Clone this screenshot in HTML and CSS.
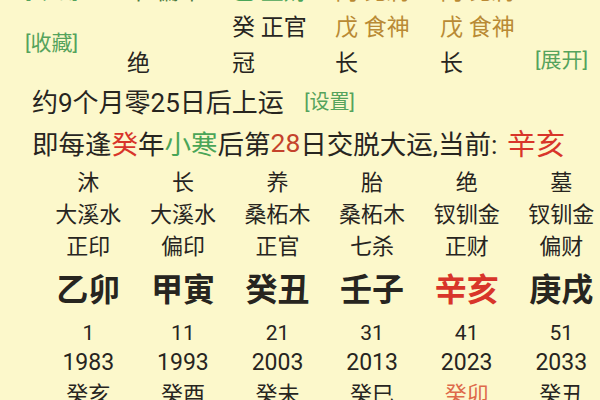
FILE: index.html
```html
<!DOCTYPE html>
<html lang="zh">
<head>
<meta charset="utf-8">
<link rel="stylesheet" href="styles.css">
</head>
<body>
<div class="page">
  <div class="pillars">
    <div class="cell lbl link">[详细]</div>
    <div class="cell dkgreen">甲 偏印</div>
    <div class="cell green">己 正财</div>
    <div class="cell brown">丙 比肩</div>
    <div class="cell brown">丙 比肩</div>
    <div class="cell"></div>

    <div class="cell lbl link span2">[收藏]</div>
    <div class="cell"></div>
    <div class="cell">癸 正官</div>
    <div class="cell brown">戊 食神</div>
    <div class="cell brown">戊 食神</div>
    <div class="cell"></div>

    <div class="cell">绝</div>
    <div class="cell">冠</div>
    <div class="cell">长</div>
    <div class="cell">长</div>
    <div class="cell link open">[展开]</div>
  </div>

  <div class="info">
    <div class="line1">约9个月零25日后上运 <span class="link set">[设置]</span></div>
    <div class="line2">即每逢<span class="red">癸</span>年<span class="green">小寒</span>后第<span class="rust">28</span>日交脱大运,当前: <span class="red big">辛亥</span></div>
  </div>

  <div class="yun">
    <div class="r-state">沐</div><div class="r-state">长</div><div class="r-state">养</div><div class="r-state">胎</div><div class="r-state">绝</div><div class="r-state">墓</div>
    <div class="r-ny">大溪水</div><div class="r-ny">大溪水</div><div class="r-ny">桑柘木</div><div class="r-ny">桑柘木</div><div class="r-ny">钗钏金</div><div class="r-ny">钗钏金</div>
    <div class="r-god">正印</div><div class="r-god">偏印</div><div class="r-god">正官</div><div class="r-god">七杀</div><div class="r-god">正财</div><div class="r-god">偏财</div>
    <div class="r-gz">乙卯</div><div class="r-gz">甲寅</div><div class="r-gz">癸丑</div><div class="r-gz">壬子</div><div class="r-gz red">辛亥</div><div class="r-gz">庚戌</div>
    <div class="r-age">1</div><div class="r-age">11</div><div class="r-age">21</div><div class="r-age">31</div><div class="r-age">41</div><div class="r-age">51</div>
    <div class="r-year">1983</div><div class="r-year">1993</div><div class="r-year">2003</div><div class="r-year">2013</div><div class="r-year">2023</div><div class="r-year">2033</div>
    <div class="r-ln">癸亥</div><div class="r-ln">癸酉</div><div class="r-ln">癸未</div><div class="r-ln">癸巳</div><div class="r-ln orange">癸卯</div><div class="r-ln">癸丑</div>
  </div>
</div>
</body>
</html>
```

FILE: styles.css
```css
html, body {
  margin: 0;
  padding: 0;
  background: #fcf8cb;
  width: 600px;
  height: 400px;
  overflow: hidden;
}
.page {
  font-family: Roboto, "Noto Sans CJK SC", sans-serif;
  color: #27251f;
  width: 600px;
}
.pillars {
  display: grid;
  grid-template-columns: 102px 105px 103px 105px 95px 90px;
  grid-template-rows: 36px 36px 36px;
  margin-top: -27px;
  padding-left: 25px;
  font-size: 23px;
}
.cell {
  display: flex;
  align-items: center;
  white-space: nowrap;
  line-height: 1;
}
.span2 {
  grid-row: span 2;
  padding-bottom: 4px;
}
.open { padding-bottom: 5px; }
.link { color: #55a35c; font-size: 21px; }
.green { color: #4aa557; }
.dkgreen { color: #4a7a3c; }
.brown { color: #b98a34; }
.red { color: #d8352a; }
.rust { color: #c4432c; }
.orange { color: #de6a4a; }

.info {
  padding-left: 32px;
}
.line1 {
  font-size: 26px;
  height: 40px;
  display: flex;
  align-items: center;
  margin-top: -1px;
  white-space: pre;
}
.line1 .set { margin-left: 14px; font-size: 20px; }
.line2 {
  font-size: 26.5px;
  height: 44px;
  display: flex;
  align-items: center;
  white-space: pre;
}
.line2 .big { font-size: 29px; margin-left: 3px; }

.yun {
  display: grid;
  grid-template-columns: repeat(6, 94.6px);
  padding-left: 41px;
  margin-top: 3px;
  justify-items: center;
  white-space: nowrap;
}
.yun > div { line-height: 1; display: flex; align-items: center; }
.r-state { font-size: 22px; height: 32px; }
.r-ny { font-size: 22px; height: 32px; }
.r-god { font-size: 22px; height: 32px; }
.r-gz { font-size: 32px; font-weight: bold; height: 54px; }
.r-age { font-size: 21px; height: 32px; }
.r-year { font-size: 23px; height: 26px; }
.r-ln { font-size: 22px; height: 40px; }
```
